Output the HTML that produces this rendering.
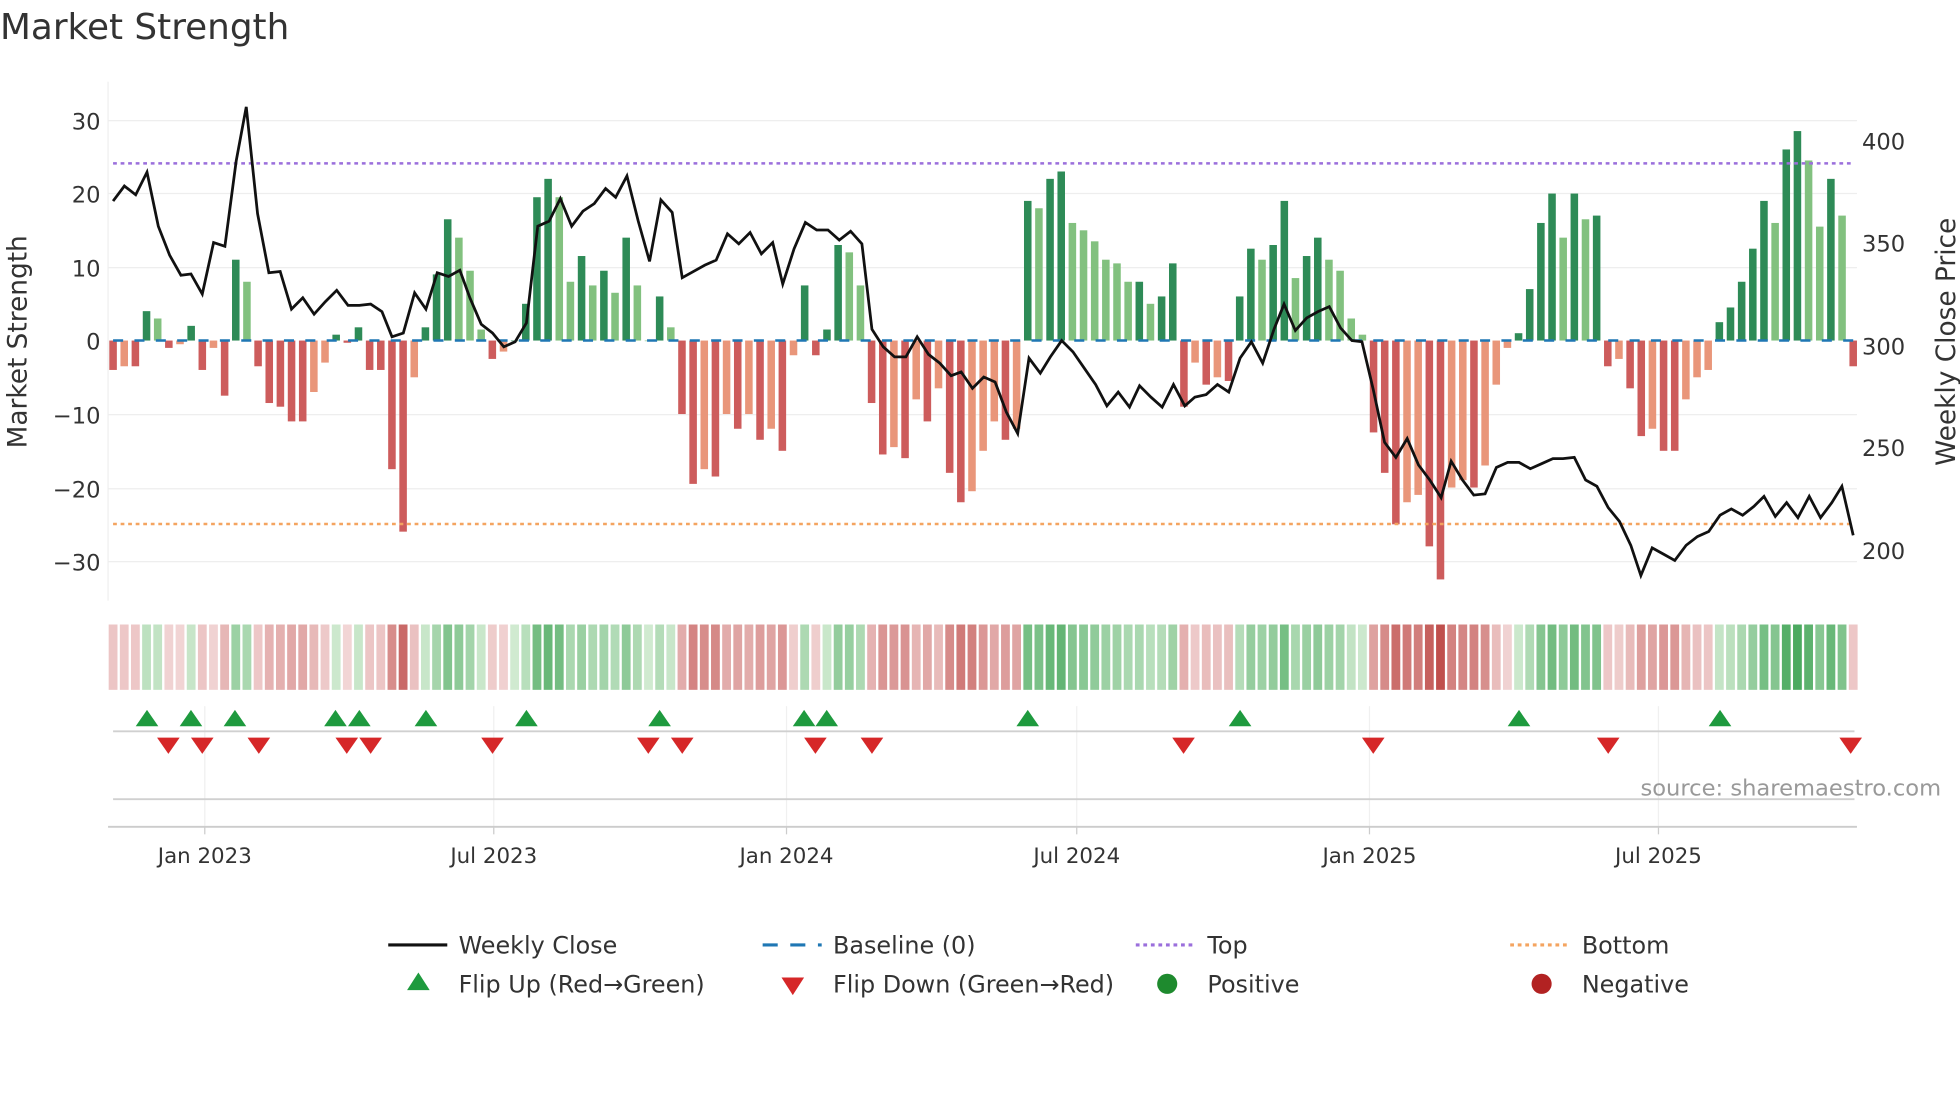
<!DOCTYPE html>
<html><head><meta charset="utf-8"><style>
html,body{margin:0;padding:0;background:#fff;width:1960px;height:1102px;overflow:hidden}
svg{display:block}
text{font-family:"DejaVu Sans","Liberation Sans",sans-serif;fill:#333}
</style></head><body>
<svg id="s" width="1960" height="1102" viewBox="0 0 1560 877" xmlns="http://www.w3.org/2000/svg">
<text x="0" y="31" font-size="28.5" fill="#333">Market Strength</text>
<g stroke="#eeeeee" stroke-width="1">
<line x1="86" x2="1478" y1="96" y2="96"/><line x1="86" x2="1478" y1="154" y2="154"/><line x1="86" x2="1478" y1="213" y2="213"/><line x1="86" x2="1478" y1="330" y2="330"/><line x1="86" x2="1478" y1="389" y2="389"/><line x1="86" x2="1478" y1="447" y2="447"/>
<line x1="86" x2="86" y1="65" y2="478"/>
</g>
<g font-size="18" text-anchor="end">
<text x="80" y="103">30</text><text x="80" y="161">20</text><text x="80" y="220">10</text><text x="80" y="278">0</text><text x="80" y="337">−10</text><text x="80" y="396">−20</text><text x="80" y="454">−30</text>
</g>
<g font-size="18">
<text x="1482" y="119">400</text><text x="1482" y="200">350</text><text x="1482" y="282">300</text><text x="1482" y="363">250</text><text x="1482" y="445">200</text>
</g>
<text transform="translate(21,272) rotate(-90)" font-size="21" text-anchor="middle">Market Strength</text>
<text transform="translate(1556,272) rotate(-90)" font-size="21" text-anchor="middle">Weekly Close Price</text>
<g id="bars"></g>
<line x1="90" x2="1476" y1="271" y2="271" stroke="#1f77b4" stroke-width="2" stroke-dasharray="8,9"/>
<line x1="90" x2="1476" y1="130" y2="130" stroke="#9b6fdc" stroke-width="2" stroke-dasharray="3,3"/>
<line x1="90" x2="1476" y1="417" y2="417" stroke="#f4a460" stroke-width="2" stroke-dasharray="3,3"/>
<polyline id="pl" fill="none" stroke="#111" stroke-width="2.2" points="90,160 99,148 108,155 117,137 126,180 135,203 144,219 152,218 161,234 170,193 179,196 188,128 196,85 205,170 214,217 223,216 232,246 241,237 250,250 259,240 268,231 277,243 286,243 295,242 304,248 312,268 321,265 330,233 339,246 348,217 357,220 366,215 374,237 383,258 392,265 401,276 410,272 419,257 428,180 437,176 446,158 455,180 464,168 473,162 482,150 490,157 499,140 508,176 517,208 526,159 535,169 543,221 552,216 561,211 570,207 579,186 588,194 597,185 606,202 615,193 623,226 632,198 641,177 650,183 659,183 668,191 677,184 686,194 694,262 703,276 712,284 721,284 730,268 739,282 748,289 757,299 765,296 774,309 783,300 792,304 801,328 810,345 819,285 828,297 836,284 845,271 854,280 863,293 872,306 881,323 890,312 899,324 907,307 916,316 925,324 934,306 943,323 951,316 960,314 969,306 978,312 987,285 996,272 1005,289 1014,262 1022,242 1031,263 1040,253 1049,248 1058,244 1067,261 1076,271 1084,272 1093,310 1102,352 1111,364 1120,349 1129,370 1138,382 1147,396 1155,367 1164,382 1173,394 1182,393 1191,372 1200,368 1209,368 1218,373 1227,369 1236,365 1244,365 1253,364 1262,382 1271,387 1280,404 1289,415 1298,434 1306,458 1315,436 1324,441 1333,446 1342,434 1351,427 1360,423 1369,410 1378,405 1387,410 1396,403 1404,395 1413,411 1422,400 1431,412 1440,395 1449,412 1458,400 1466,387 1475,426"/>
<g id="heat"></g>
<g stroke="#f0f0f0" stroke-width="1">
<line x1="163" x2="163" y1="562" y2="658"/><line x1="393" x2="393" y1="562" y2="658"/><line x1="626" x2="626" y1="562" y2="658"/><line x1="857" x2="857" y1="562" y2="658"/><line x1="1090" x2="1090" y1="562" y2="658"/><line x1="1320" x2="1320" y1="562" y2="658"/>
</g>
<line x1="90" x2="1476" y1="582" y2="582" stroke="#d0d0d0" stroke-width="1.5"/>
<line x1="90" x2="1476" y1="636" y2="636" stroke="#d0d0d0" stroke-width="1.5"/>
<line x1="86" x2="1478" y1="658" y2="658" stroke="#ccc" stroke-width="1.5"/>
<g stroke="#ccc"><line x1="163" x2="163" y1="658" y2="664"/><line x1="393" x2="393" y1="658" y2="664"/><line x1="626" x2="626" y1="658" y2="664"/><line x1="857" x2="857" y1="658" y2="664"/><line x1="1090" x2="1090" y1="658" y2="664"/><line x1="1320" x2="1320" y1="658" y2="664"/></g>
<g id="mk"></g>
<text x="1545" y="633" font-size="18" text-anchor="end" fill="#999" style="fill:#999">source: sharemaestro.com</text>
<g font-size="17" text-anchor="middle">
<text x="163" y="687">Jan 2023</text><text x="393" y="687">Jul 2023</text><text x="626" y="687">Jan 2024</text><text x="857" y="687">Jul 2024</text><text x="1090" y="687">Jan 2025</text><text x="1320" y="687">Jul 2025</text>
</g>
<g font-size="19">
<line x1="309" x2="356" y1="752" y2="752" stroke="#111" stroke-width="2.5"/><text x="365" y="759">Weekly Close</text>
<line x1="607" x2="654" y1="752" y2="752" stroke="#1f77b4" stroke-width="2.5" stroke-dasharray="12,10"/><text x="663" y="759">Baseline (0)</text>
<line x1="904" x2="951" y1="752" y2="752" stroke="#9b6fdc" stroke-width="2.5" stroke-dasharray="3,3"/><text x="961" y="759">Top</text>
<line x1="1202" x2="1249" y1="752" y2="752" stroke="#f4a460" stroke-width="2.5" stroke-dasharray="3,3"/><text x="1259" y="759">Bottom</text>
<polygon points="333,774 324,788 342,788" fill="#1e9a3e"/><text x="365" y="790">Flip Up (Red→Green)</text>
<polygon points="622,778 640,778 631,792" fill="#d62728"/><text x="663" y="790">Flip Down (Green→Red)</text>
<circle cx="929" cy="783" r="8" fill="#1e8a2e"/><text x="961" y="790">Positive</text>
<circle cx="1227" cy="783" r="8" fill="#b22222"/><text x="1259" y="790">Negative</text>
</g>
</svg>
<script>
var v=[-4,-3.5,-3.5,4,3,-1,-0.5,2,-4,-1,-7.5,11,8,-3.5,-8.5,-9,-11,-11,-7,-3,0.8,-0.3,1.8,-4,-4,-17.5,-26,-5,1.8,9,16.5,14,9.5,1.5,-2.5,-1.5,0,5,19.5,22,19.5,8,11.5,7.5,9.5,6.5,14,7.5,0,6,1.8,-10,-19.5,-17.5,-18.5,-10,-12,-10,-13.5,-12,-15,-2,7.5,-2,1.5,13,12,7.5,-8.5,-15.5,-14.5,-16,-8,-11,-6.5,-18,-22,-20.5,-15,-11,-13.5,-12,19,18,22,23,16,15,13.5,11,10.5,8,8,5,6,10.5,-9,-3,-6,-5,-5.5,6,12.5,11,13,19,8.5,11.5,14,11,9.5,3,0.8,-12.5,-18,-25,-22,-21,-28,-32.5,-20,-19,-20,-17,-6,-1,1,7,16,20,14,20,16.5,17,-3.5,-2.5,-6.5,-13,-12,-15,-15,-8,-5,-4,2.5,4.5,8,12.5,19,16,26,28.5,24.5,15.5,22,17,-3.5];
var NS="http://www.w3.org/2000/svg";
var n=v.length,x0=90,x1=1475,dx=(x1-x0)/(n-1);
var B=document.getElementById('bars'),H=document.getElementById('heat'),M=document.getElementById('mk');
function mix(a,b,t){return 'rgb('+[0,1,2].map(function(i){return Math.round(a[i]+(b[i]-a[i])*t)}).join(',')+')';}
function r(g,x,y,w,h,f){var e=document.createElementNS(NS,'rect');e.setAttribute('x',x);e.setAttribute('y',y);e.setAttribute('width',w);e.setAttribute('height',h);e.setAttribute('fill',f);g.appendChild(e);}
for(var i=0;i<n;i++){var x=x0+i*dx,val=v[i],p=i?v[i-1]:0,c;
 if(val>=0){c=(val>=p)?'#2e8b57':'#82c17f';}else{c=(val<=p)?'#cd5c5c':'#e9967a';}
 var h=Math.abs(val)*5.85;r(B,x-3,val>=0?271-h:271,6,Math.max(h,0.5),c);
 var hc;if(val>=0){hc=mix([208,234,208],[76,170,96],Math.min(val/28,1));}else{hc=mix([242,214,214],[192,80,77],Math.min(-val/32,1));}
 r(H,x-3.5,497,7,52,hc);}
function tri(x,y,up){var e=document.createElementNS(NS,'polygon');
 e.setAttribute('points',up?(x+','+(y-7)+' '+(x-9)+','+(y+6)+' '+(x+9)+','+(y+6)):((x-9)+','+(y-6)+' '+(x+9)+','+(y-6)+' '+x+','+(y+7)));
 e.setAttribute('fill',up?'#1e9a3e':'#d62728');M.appendChild(e);}
[117,152,187,267,286,339,419,525,640,658,818,987,1209,1369].forEach(function(x){tri(x,572,1)});
[134,161,206,276,295,392,516,543,649,694,942,1093,1280,1473].forEach(function(x){tri(x,593,0)});
</script>
</body></html>
